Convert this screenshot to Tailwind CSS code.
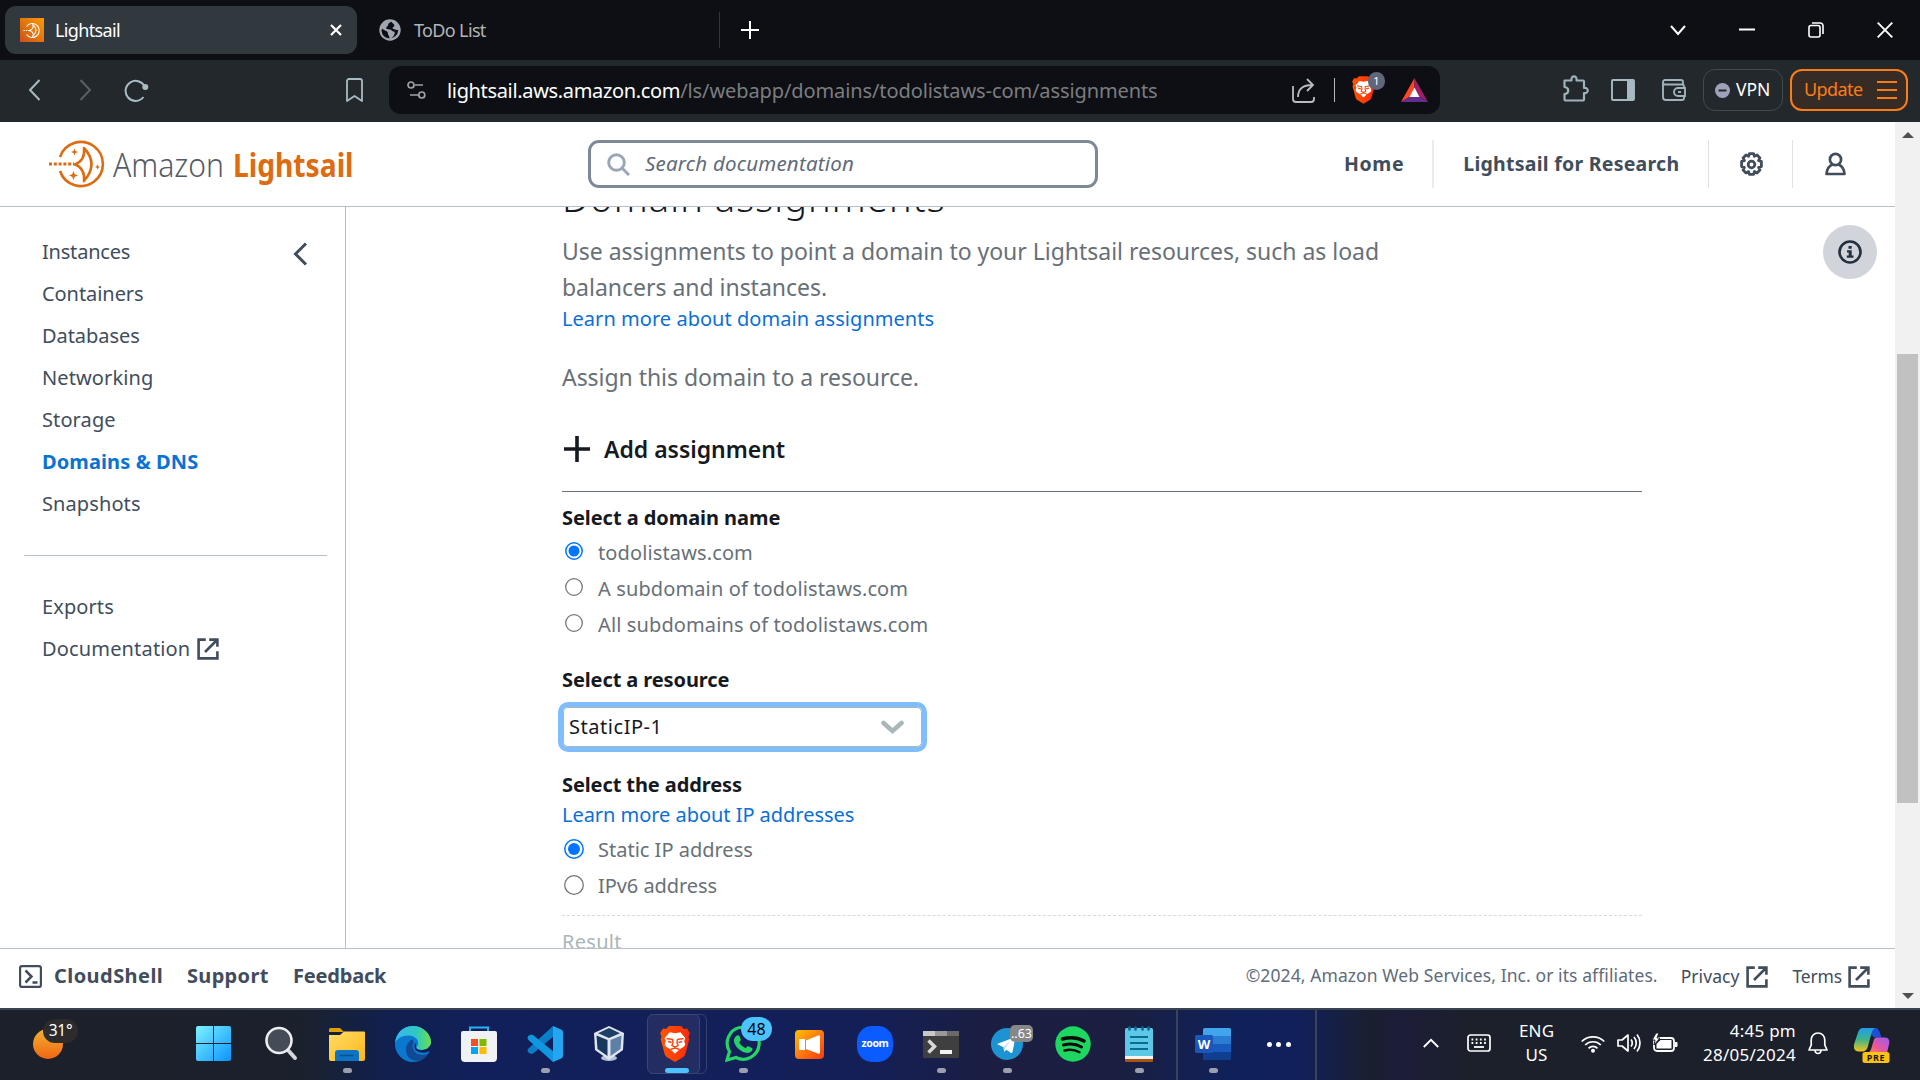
<!DOCTYPE html>
<html lang="en">
<head>
<meta charset="utf-8">
<title>Lightsail</title>
<script src="https://cdn.jsdelivr.net/npm/@tailwindcss/browser@4"></script>
</head>
<body class="w-[1920px] h-[1080px] overflow-hidden flex flex-col bg-white font-['Noto_Sans',sans-serif]">
<svg class="absolute w-0 h-0">
  <linearGradient id="lionFill"><stop offset="0" stop-color="#ff5500"/><stop offset="1" stop-color="#ff2a0a"/></linearGradient>
  <symbol id="lion" viewBox="0 0 30 36">
    <path fill="url(#lionFill)" d="M9 0h12l3 3 3-.6L29.800 7l-1.300 3.500.8 3-3.800 14c-.5 1.800-1.300 3-3 4L15 36l-7.500-4.500c-1.700-1-2.500-2.200-3-4L.7 13.500l.8-3L.2 7 3 2.400 6 3z"/>
    <path fill="#fff" d="M9.500 6.200 15 7.200l5.500-1 4.900 6-1.300 2.800 1.200 3.200-1.200 2.300-4.700 3-4.400 4.300-4.400-4.300-4.700-3-1.200-2.300L5.900 15l-1.300-2.800z"/>
    <path fill="none" stroke="#f9480f" stroke-width="1.500" d="M6.500 12.800c2-.5 4 .8 6 .7l.5 3-1 3 3 1.700 3-1.700-1-3 .5-3c2 .1 4-1.200 6-.7M8 15.500l3.500 1M22 15.500l-3.500 1M15 21v2M10.500 23.500l4.500-1.800 4.500 1.800"/>
  </symbol>
  <symbol id="ext" viewBox="0 0 22 22">
    <path fill="none" stroke="currentColor" stroke-width="2.600" d="M8.800 1.600H1.600v18.800h18.800v-7.200M12.200 1.600h8.200v7.200M8 14 20 2"/>
  </symbol>
</svg>

<!-- tab strip -->
<div class="h-[60px] bg-[#0d0f14] flex items-center shrink-0">
  <div class="ml-[5px] w-[352px] h-12 rounded-[11px] bg-[#31393e] flex items-center">
    <svg class="ml-[15px] w-6 h-6" viewBox="0 0 24 24"><defs><linearGradient id="fav" x1="0" y1="1" x2="1" y2="0"><stop offset="0" stop-color="#c8511b"/><stop offset="1" stop-color="#ff9900"/></linearGradient></defs><rect width="24" height="24" fill="url(#fav)"/><g fill="none" stroke="#fff" stroke-width="1.100"><path d="M6.500 8.500a7 7 0 1 1 0 8M13 7c4 3 4 7.500 0 11 .6-2-.5-4.500-3.500-5.500C12.500 11.500 13.500 9 13 7z"/><path stroke-dasharray="1.300 1" d="M3.500 12.500h6"/></g></svg>
    <span class="ml-[11px] pb-px text-[18px] leading-[24px] tracking-[-0.036em] text-white">Lightsail</span>
    <svg class="ml-auto mr-[15px] w-3 h-3" viewBox="0 0 12 12"><path stroke="#fff" stroke-width="2.200" d="M1 1l10 10M11 1 1 11"/></svg>
  </div>
  <svg class="ml-[22px] w-[22px] h-[22px]" viewBox="0 0 22 22"><circle cx="11" cy="11" r="10.700" fill="#a2a6ae"/><path fill="#0d0f14" d="M12 2.500c-1 1.500-3 1.500-2.800 3.300.2 1.400-2 1.400-2 3.200 0 1.200 1.500 1.400 3.300 1.400 2.500 0 2.500 2 4.300 2.200 1 .2 1.200 1.400.6 2.600-.9 1.800-2 4-4.500 4.300-.8 0-.2-2-1.400-3.300C8.300 15 9.500 13.500 8 12.500 6.300 11.400 4 10.500 3 9.500L2.500 12a8.600 8.600 0 0 0 7 7.300 8.600 8.600 0 0 0 9.800-8.300c-2.200.4-3-1-4.800-1-1.500-.1-1-1.800.2-2.200 1-.4.800-2.300-.2-2.800z"/></svg>
  <span class="ml-[13px] pb-px text-[18px] leading-[24px] tracking-[-0.036em] text-[#b3b4b7]">ToDo List</span>
  <div class="ml-[233px] w-px h-9 bg-[#34363b]"></div>
  <svg class="ml-[21px] w-[18px] h-[18px]" viewBox="0 0 18 18"><path stroke="#fff" stroke-width="2" d="M9 0v18M0 9h18"/></svg>
  <div class="ml-auto mr-[27px] flex items-center gap-[53px]">
    <svg class="w-4 h-4" viewBox="0 0 16 16"><path fill="none" stroke="#fff" stroke-width="2" d="M1 4l7 8 7-8"/></svg>
    <svg class="w-4 h-4" viewBox="0 0 16 16"><path stroke="#fff" stroke-width="2" d="M0 7.500h16"/></svg>
    <svg class="w-4 h-4" viewBox="0 0 16 16"><g fill="none" stroke="#fff" stroke-width="1.600"><rect x="1" y="3.500" width="11" height="11.500" rx="2"/><path d="M4 1h8a3 3 0 0 1 3 3v8"/></g></svg>
    <svg class="w-4 h-4" viewBox="0 0 16 16"><path stroke="#fff" stroke-width="1.900" d="M.7.700l14.600 14.600M15.300.7.700 15.300"/></svg>
  </div>
</div>

<!-- toolbar -->
<div class="h-[62px] bg-[#22282b] flex items-center shrink-0 pb-0.5">
  <svg class="ml-7 w-[13px] h-[22px]" viewBox="0 0 13 22"><path fill="none" stroke="#a9bbc3" stroke-width="2" d="M11.500 1 2 11l9.500 10"/></svg>
  <svg class="ml-[38px] w-[13px] h-[22px]" viewBox="0 0 13 22"><path fill="none" stroke="#566066" stroke-width="2" d="M1.500 1 11 11 1.500 21"/></svg>
  <svg class="ml-[32px] w-[25px] h-6" viewBox="0 0 25 24"><path fill="none" stroke="#a9bbc3" stroke-width="2" d="M21 9.500A10 10 0 1 0 19.500 19"/><circle cx="21.300" cy="9" r="3" fill="#a9bbc3"/></svg>
  <svg class="ml-[197px] w-[17px] h-6" viewBox="0 0 17 24"><path fill="none" stroke="#a9bbc3" stroke-width="1.800" stroke-linejoin="round" d="M1 3a2 2 0 0 1 2-2h11a2 2 0 0 1 2 2v20l-7.500-5L1 23z"/></svg>
  <div class="ml-[26px] w-[1051px] h-12 rounded-[12px] bg-[#0d0f14] flex items-center">
    <svg class="ml-[18px] w-[19px] h-5" viewBox="0 0 19 20"><g fill="none" stroke="#a0a3a6" stroke-width="1.700"><circle cx="4" cy="5" r="3"/><path d="M8 5h8M3 15h8"/><circle cx="14.800" cy="15" r="3"/></g></svg>
    <div class="ml-[21px] pt-px flex text-[20px] leading-[28px] text-[#7b7d80] whitespace-nowrap"><span class="text-white tracking-[-0.017em]">lightsail.aws.amazon.com</span><span class="tracking-[-0.005em]">/ls/webapp/domains/todolistaws-com/assignments</span></div>
    <svg class="ml-auto w-[23px] h-[25px]" viewBox="0 0 23 25"><path fill="none" stroke="#b9bcc0" stroke-width="1.800" d="M1 8v13a3 3 0 0 0 3 3h15a3 3 0 0 0 3-3v-2M6 19C6 11 11 7 20 7M15 1l6 6-6 6"/></svg>
    <div class="ml-[19px] w-px h-6 bg-[#b5b8bb]"></div>
    <div class="relative ml-[17px] w-[24px] h-7"><svg class="w-[23px] h-7"><use href="#lion"/></svg>
      <div class="absolute left-4 -top-1 w-[17px] h-[18px] rounded-full bg-[#62667a] text-white text-[11px] leading-[18px] text-center">1</div></div>
    <svg class="ml-[25px] mr-[12px] w-[27px] h-[24px]" viewBox="0 0 27 24"><path fill="#ff4724" d="M13.500 0 0 24l9-5.500 4.500-8z"/><path fill="#9e1f63" d="M13.500 0 27 24l-9-5.500-4.500-8z"/><path fill="#662d91" d="M0 24h27l-9-5.500H9z"/><path fill="#fff" d="M13.500 9.500 8.500 19h10z"/></svg>
  </div>
  <svg class="ml-[123px] mb-1 w-[26px] h-[27px]" viewBox="0 0 26 27"><path fill="none" stroke="#9fb1b9" stroke-width="2.200" stroke-linejoin="round" d="M1.500 5.500h7c-1-5.500 6-5.500 5 0h6.500a1 1 0 0 1 1 1V13c5-1 5 6 0 5v6a1.500 1.500 0 0 1-1.500 1.500H3A1.500 1.500 0 0 1 1.500 24v-5c5-.5 5-6.500 0-7z"/></svg>
  <svg class="ml-[22px] w-6 h-6" viewBox="0 0 24 24"><rect x="1" y="2" width="22" height="20" rx="1" fill="none" stroke="#a6b8c0" stroke-width="1.900"/><path fill="#a6b8c0" d="M16 2h7v20h-7z"/></svg>
  <svg class="ml-[27px] w-6 h-6" viewBox="0 0 24 24"><g fill="none" stroke="#9fb1b9" stroke-width="1.900"><path d="M21 7V4a2 2 0 0 0-2-2H3a2 2 0 0 0-2 2v15a3 3 0 0 0 3 3h16a2 2 0 0 0 2-2v-2M1 4.500C1 6 2 6.500 3 6.500h17a2 2 0 0 1 2 2V10"/><path d="M23 10h-7a4 4 0 0 0 0 8h7z"/><path d="M16 14h3"/></g></svg>
  <div class="ml-[17px] w-[80px] h-[42px] rounded-[12px] border border-[#3f4b50] flex items-center">
    <svg class="ml-[11px] w-[15px] h-[15px]" viewBox="0 0 15 15"><circle cx="7.500" cy="7.500" r="7.500" fill="#a0a2ba"/><path stroke="#22282b" stroke-width="2" d="M3.500 7.500h8"/></svg>
    <span class="ml-[6px] pb-0.5 text-[17.500px] text-white">VPN</span>
  </div>
  <div class="ml-[7px] w-[118px] h-[42px] rounded-[12px] border-2 border-[#fb7d16] bg-[#372c25] flex items-center">
    <span class="ml-[12px] pb-0.5 text-[18px] tracking-[-0.032em] text-[#fb7d16]">Update</span>
    <svg class="ml-auto mr-[9px] w-5 h-[18px]" viewBox="0 0 20 18"><path stroke="#fb7d16" stroke-width="1.800" d="M0 1h20M0 9h20M0 17h20"/></svg>
  </div>
</div>

<!-- web page -->
<div class="h-[886px] flex shrink-0">
 <div class="w-[1895px] flex flex-col">
  <header class="h-[85px] border-b border-[#b6bec9] flex items-center shrink-0 font-bold text-[19.500px] text-[#414d5c]">
    <svg class="ml-12 w-[310px] h-[52px] overflow-visible" viewBox="48 138 310 52">
      <g fill="none" stroke="#dd6b10" stroke-width="2.600"><path d="M60 157a22 22 0 1 1 0 14"/><path stroke-dasharray="3 1.800" stroke-width="3" d="M49 164h25"/><path stroke-linejoin="round" d="M84 148q15 16 0 33c1-7-2-14-9-16.500 7-3 10-9 9-16.500z"/></g>
      <g fill="#dd6b10"><path d="M74.500 148.500l1 2.500 2.500 1-2.500 1-1 2.500-1-2.500-2.500-1 2.500-1zM73.500 171l1.300 3.200 3.200 1.300-3.200 1.300-1.300 3.200-1.300-3.200-3.200-1.300 3.200-1.300zM97.500 164.500l.8 1.700 1.700.8-1.700.8-.8 1.700-.8-1.700-1.700-.8 1.700-.8z"/>
      <text x="233" y="176.500" font-size="33" font-weight="700" textLength="120.500" lengthAdjust="spacingAndGlyphs">Lightsail</text></g>
      <text x="113" y="176.500" font-size="33" font-weight="300" fill="#545b64" textLength="111" lengthAdjust="spacingAndGlyphs">Amazon</text>
    </svg>
    <div class="ml-[230px] w-[510px] h-12 rounded-[11px] border-[3px] border-[#7d8998] flex items-center">
      <svg class="ml-[16px] w-[23px] h-[23px]" viewBox="0 0 23 23"><g fill="none" stroke="#9ba7b6" stroke-width="3"><circle cx="9.500" cy="9.500" r="7.800"/><path d="M15 15l7 7"/></g></svg>
      <span class="ml-[15px] pb-0.5 font-normal italic text-[20.500px] tracking-[0.010em] text-[#5f6b7a]">Search documentation</span>
    </div>
    <span class="ml-[246px] tracking-[0.032em]">Home</span>
    <div class="ml-[28px] w-[2px] h-12 bg-[#e9ebed]"></div>
    <span class="ml-[29px] tracking-[0.013em] whitespace-nowrap">Lightsail for Research</span>
    <div class="ml-[29px] w-px h-12 bg-[#e0e2e5]"></div>
    <svg class="ml-[30px] w-[25px] h-[25px]" viewBox="0 0 24 24"><g fill="none" stroke="#414d5c" stroke-width="2.700" stroke-linejoin="round"><path d="M10 1.500h4l.8 2.700 2.500-1.300 2.800 2.800-1.300 2.500 2.700.8v5l-2.700.8 1.300 2.500-2.800 2.800-2.500-1.300-.8 2.700h-4l-.8-2.700-2.500 1.300-2.800-2.800 1.300-2.500-2.700-.8v-5l2.700-.8-1.300-2.500 2.800-2.800 2.500 1.300z"/><circle cx="12" cy="12" r="3.200"/></g></svg>
    <div class="ml-[28px] w-px h-12 bg-[#e0e2e5]"></div>
    <svg class="ml-[32px] w-[21px] h-6" viewBox="0 0 21 24"><g fill="none" stroke="#414d5c" stroke-width="2.700" stroke-linejoin="round"><circle cx="10.500" cy="7.500" r="5.600"/><path d="M7.500 12.500C4 14 1.800 17 1.500 22h18c-.3-5-2.500-8-6-9.500"/></g></svg>
  </header>

  <div class="h-[741px] flex overflow-hidden">
    <aside class="w-[346px] shrink-0 border-r border-[#b6bec9] pt-[24px] text-[20px] text-[#414d5c] leading-[42px] tracking-[0.005em]">
      <div class="flex justify-between pl-[42px] pr-[37px]">
        <nav class="flex flex-col">
          <a class="tracking-[-0.010em]">Instances</a><a class="tracking-[-0.003em]">Containers</a><a class="tracking-[-0.003em]">Databases</a><a>Networking</a><a>Storage</a><a class="font-bold text-[#0972d3]">Domains &amp; DNS</a><a>Snapshots</a>
        </nav>
        <svg class="mt-[11px] w-[15px] h-6" viewBox="0 0 15 24"><path fill="none" stroke="#414d5c" stroke-width="3" d="M13 1.500 2.500 12 13 22.500"/></svg>
      </div>
      <div class="ml-6 mr-[18px] mt-[30px] h-px bg-[#b6bec9]"></div>
      <nav class="flex flex-col pl-[42px] mt-[30px]"><a>Exports</a><a class="flex items-center tracking-[0.008em]">Documentation<svg class="ml-[7px] w-[22px] h-[22px]"><use href="#ext"/></svg></a></nav>
    </aside>

    <main class="grow relative pl-[216px] text-[20px] leading-[30px] tracking-[0.006em] text-[#687078]">
      <h1 class="-mt-[34px] text-[38px] leading-[48px] font-light text-[#16191f] tracking-[0.029em]">Domain assignments</h1>
      <p class="mt-[12px] text-[23px] leading-[36px] tracking-[-0.001em] w-[900px]">Use assignments to point a domain to your Lightsail resources, such as load<br>balancers and instances.</p>
      <a class="block -mt-px tracking-[0.002em] text-[#0a6fd6]">Learn more about domain assignments</a>
      <p class="mt-[25px] text-[23px] leading-[36px] tracking-[-0.002em]">Assign this domain to a resource.</p>
      <div class="mt-[36px] flex items-center text-[23px] leading-[36px] font-semibold tracking-[-0.001em] text-[#16191f]"><svg class="ml-[2px] mr-[14px] w-[26px] h-[26px]" viewBox="0 0 26 26"><path stroke="#16191f" stroke-width="3.600" d="M13 0v26M0 13h26"/></svg>Add assignment</div>
      <div class="mt-[24px] w-[1080px] h-px bg-[#687078]"></div>
      <h2 class="mt-[11px] font-bold text-[#16191f] tracking-[-0.003em]">Select a domain name</h2>
      <div class="mt-[2px] flex flex-col leading-[36px]">
        <label class="flex"><svg class="ml-[3px] mt-[7px] mr-[15px] w-[18px] h-[18px]" viewBox="0 0 18 18"><circle cx="9" cy="9" r="8.200" fill="#fff" stroke="#0075ff" stroke-width="1.500"/><circle cx="9" cy="9" r="5.500" fill="#0075ff"/></svg>todolistaws.com</label>
        <label class="flex"><svg class="ml-[3px] mt-[7px] mr-[15px] w-[18px] h-[18px]" viewBox="0 0 18 18"><circle cx="9" cy="9" r="8.300" fill="#fff" stroke="#767676" stroke-width="1.300"/></svg>A subdomain of todolistaws.com</label>
        <label class="flex"><svg class="ml-[3px] mt-[7px] mr-[15px] w-[18px] h-[18px]" viewBox="0 0 18 18"><circle cx="9" cy="9" r="8.300" fill="#fff" stroke="#767676" stroke-width="1.300"/></svg>All subdomains of todolistaws.com</label>
      </div>
      <h2 class="mt-[22px] font-bold text-[#16191f] tracking-[-0.005em]">Select a resource</h2>
      <div class="mt-[12px] w-[359px] ml-px h-10 rounded-[5px] border border-[#aab7b8] ring-5 ring-[#80bdff] flex items-center justify-between text-[#16191f] tracking-[0.027em]"><span class="ml-[5px]">StaticIP-1</span><svg class="mr-[17px] w-[23px] h-[15px]" viewBox="0 0 23 15"><path fill="none" stroke="#aab7b8" stroke-width="4.600" stroke-linecap="round" d="M2.500 3l9 8 9-8"/></svg></div>
      <h2 class="mt-[23px] font-bold text-[#16191f] tracking-[-0.005em]">Select the address</h2>
      <a class="block tracking-[-0.002em] text-[#0a6fd6]">Learn more about IP addresses</a>
      <div class="mt-[2px] flex flex-col leading-[36px]">
        <label class="flex tracking-[0em]"><svg class="ml-[2px] mt-[7px] mr-[14px] w-5 h-5" viewBox="0 0 20 20"><circle cx="10" cy="10" r="9.200" fill="#fff" stroke="#0075ff" stroke-width="1.500"/><circle cx="10" cy="10" r="6" fill="#0075ff"/></svg>Static IP address</label>
        <label class="flex tracking-[-0.003em]"><svg class="ml-[2px] mt-[7px] mr-[14px] w-5 h-5" viewBox="0 0 20 20"><circle cx="10" cy="10" r="9.300" fill="#fff" stroke="#767676" stroke-width="1.300"/></svg>IPv6 address</label>
      </div>
      <div class="mt-[11px] w-[1080px] border-t border-dashed border-[#d5dbdb]"></div>
      <p class="mt-[11px] text-[#aab7b8] tracking-[0.014em]">Result</p>
      <div class="absolute left-[1477px] top-[18px] w-[54px] h-[54px] rounded-full bg-[#d1d5db] flex items-center justify-center">
        <svg class="w-6 h-6" viewBox="0 0 24 24"><circle cx="12" cy="12" r="10.500" fill="none" stroke="#232f3e" stroke-width="2.600"/><path fill="#232f3e" d="M10.500 6h3.200v2.800h-3.200zM9 10.300h4.700v5.200h1.800v2.200H8.800v-2.200h1.900v-3H9z"/></svg>
      </div>
    </main>
  </div>

  <footer class="h-[60px] border-t border-[#b6bec9] flex items-center pb-[5px] text-[20px] text-[#414d5c]">
    <svg class="ml-[19px] w-[23px] h-[23px]" viewBox="0 0 23 23"><g fill="none" stroke="#414d5c" stroke-width="2.200"><rect x="1.100" y="1.100" width="20.800" height="20.800" rx="2"/><path stroke-width="2.500" d="M6.500 5.500l6 6-6 6M13.500 17.500h5"/></g></svg>
    <div class="ml-[12px] pb-px flex font-bold"><span class="tracking-[0.022em] w-[133px]">CloudShell</span><span class="tracking-[0.016em] w-[106px]">Support</span><span class="tracking-[-0.010em]">Feedback</span></div>
    <div class="ml-auto flex items-center text-[17.500px]"><span class="text-[#5f6b7a] tracking-[0.005em] pb-px">©2024, Amazon Web Services, Inc. or its affiliates.</span>
      <span class="ml-[23px] tracking-[0.004em]">Privacy</span><svg class="ml-[6px] mt-px w-[22px] h-[22px]"><use href="#ext"/></svg>
      <span class="ml-[25px] tracking-[-0.010em]">Terms</span><svg class="ml-[6px] mr-[25px] mt-px w-[22px] h-[22px]"><use href="#ext"/></svg></div>
  </footer>
 </div>
 <div class="w-[25px] bg-[#f1f1f1] flex flex-col items-center">
   <svg class="mt-[10px] w-[12px] h-[6px]" viewBox="0 0 12 6"><path fill="#505050" d="M6 0l6 6H0z"/></svg>
   <div class="mt-[216px] w-[21px] h-[449px] bg-[#c1c1c1]"></div>
   <svg class="mt-auto mb-[9px] w-[12px] h-[6px]" viewBox="0 0 12 6"><path fill="#505050" d="M6 6l6-6H0z"/></svg>
 </div>
</div>

<!-- taskbar -->
<div class="h-[72px] shrink-0 flex pb-0.5 border-t-2 border-[#3b4250] bg-[linear-gradient(90deg,#1c202b_0px,#1b212c_300px,#11204c_380px,#11205a_480px,#141f58_860px,#1b1e40_1000px,#1a1f42_1130px,#10215a_1230px,#11205a_1300px,#1a1f2f_1370px,#1c1d38_1400px,#1c202b_1470px,#1c202b_1920px)] text-white">
  <div class="w-[180px] relative"><div class="absolute left-[33px] top-[19px] w-[30px] h-[30px] rounded-full bg-linear-to-b from-[#f0b030] to-[#ef6410]"></div><div class="absolute left-[43px] top-[9px] w-[35px] h-[24px] rounded-full bg-[#2d2b2b] text-[15.500px] leading-[23px] text-center tracking-[-0.02em]">31°</div></div>

  <div class="w-[66px] flex items-center justify-center"><svg class="w-[35px] h-[35px] mb-0.5" viewBox="0 0 35 35"><defs><linearGradient id="win" x1="0" y1="0" x2="1" y2="1"><stop offset="0" stop-color="#7df3ff"/><stop offset="1" stop-color="#0a93ff"/></linearGradient></defs><path fill="url(#win)" d="M2 0h15v17H0V2a2 2 0 0 1 2-2zM18 0h15a2 2 0 0 1 2 2v15H18zM0 18h17v17H2a2 2 0 0 1-2-2zM18 18h17v15a2 2 0 0 1-2 2H18z"/></svg></div>
  <div class="w-[66px] flex items-center justify-center"><svg class="w-[34px] h-[35px] mb-0.5 ml-1" viewBox="0 0 34 35"><path stroke="#d5d7db" stroke-width="4" stroke-linecap="round" d="M23 23l8 9"/><circle cx="15" cy="14.500" r="12.500" fill="#454b57" stroke="#edeef0" stroke-width="2.600"/></svg></div>
  <div class="w-[66px] relative flex items-center justify-center pl-1"><svg class="w-9 h-[33px]" viewBox="0 0 36 33"><defs><linearGradient id="fold" x1="0" y1="0" x2="1" y2="1"><stop offset="0" stop-color="#ffdc6b"/><stop offset="1" stop-color="#fdb813"/></linearGradient></defs><path fill="#e0a10a" d="M0 1.500A1.500 1.500 0 0 1 1.500 0H11l4 4H0z"/><path fill="url(#fold)" d="M0 7h11l4-3.500h20a1 1 0 0 1 1 1V31a2 2 0 0 1-2 2H2a2 2 0 0 1-2-2z"/><path fill="#0f73c4" d="M6 33v-8a3 3 0 0 1 3-3h18a3 3 0 0 1 3 3v8z"/><path stroke="#084f8d" stroke-width="1.500" d="M10.500 27.500h14"/></svg><div class="absolute bottom-[5px] w-[9px] h-[5px] rounded-full bg-[#9b9fb0]"></div></div>
  <div class="w-[66px] flex items-center justify-center pl-1"><svg class="w-9 h-9" viewBox="0 0 36 36"><defs><linearGradient id="edge1"><stop offset="0" stop-color="#36b8f0"/><stop offset=".6" stop-color="#2fc8c0"/><stop offset="1" stop-color="#6be04a"/></linearGradient></defs><circle cx="18" cy="18" r="18" fill="#0b78d0"/><path fill="url(#edge1)" d="M0 17C1 7 8 0 18 0s18 8 18 15.500c0 6-4.500 8.500-9 8.500s-6-2-5-3.500c3.500-5-1-10.500-7.500-11C8 9 2 12 0 17z"/><path fill="#114a94" d="M17 13.500c-6 3-9 13-2 19 5 4 14 3 18.500-5-6 3-14 1-15.500-5-.8-3 0-4 .5-5 0-2 0-3-1.500-4z"/><path fill="#10205a" d="M36 24c-3 2-6 3-9 2.600-4-.3-7-2.300-7.500-5-.5-2.500.5-4 1-4.600.8 1.500.8 2.500.5 3.500-1 2 2 3.700 6 3.500 4.500-.2 7-2 9-6zM34 27.500l3-3v8l-5-2z"/></svg></div>
  <div class="w-[66px] flex items-center justify-center pl-1"><svg class="w-9 h-9" viewBox="0 0 36 36"><path fill="none" stroke="#2bb0f2" stroke-width="2" d="M9 8V1.500h18V8"/><path fill="#f1f2f4" d="M0 7a2 2 0 0 1 2-2h32a2 2 0 0 1 2 2v25a4 4 0 0 1-4 4H4a4 4 0 0 1-4-4z"/><path fill="#f25022" d="M10 13h7v7h-7z"/><path fill="#7fba00" d="M18.500 13h7v7h-7z"/><path fill="#00a4ef" d="M10 21h7v7h-7z"/><path fill="#ffb900" d="M18.500 21h7v7h-7z"/></svg></div>
  <div class="w-[66px] relative flex items-center justify-center pl-1"><svg class="w-9 h-9" viewBox="0 0 36 36"><path fill="#0a7ec9" d="M26 0 1.500 22.500c-1.500 1.500-1 3 0 4L3 27.500c1 .7 2 .5 3 0L27 10z"/><path fill="#0f97e0" d="M26 36 1.500 14c-1.500-1.500-1-3.500 0-4.300L3 9c1-.5 2-.5 3 0l21 17z"/><path fill="#23a5f2" d="M26 0l8 3.500c1.500.7 2 1.500 2 2.500v24c0 1-.5 1.800-2 2.500L26 36z"/></svg><div class="absolute bottom-[5px] w-[9px] h-[5px] rounded-full bg-[#9b9fb0]"></div></div>
  <div class="w-[66px] flex items-center justify-center"><svg class="w-[30px] h-[35px] mb-0.5" viewBox="0 0 30 35"><ellipse cx="15" cy="32" rx="8" ry="3" fill="#b5c0d5"/><path fill="#dfe5f0" d="M15 0l15 7-1 17-14 10L1 24 0 7z"/><path fill="#1d3f66" d="M15 2l11 5.200L15 12 4 7.200z"/><path fill="#17375d" d="M2.500 9.500 13.500 14v16L3.500 23z"/><path fill="#5e7fa6" d="M27.500 9.500 16.500 14v16l10-7z"/></svg></div>
  <div class="w-[66px] relative flex items-center justify-center pl-1">
    <div class="absolute left-[11px] top-[4px] w-[54px] h-[60px] rounded-[6px] border border-[#343f72]"></div>
    <div class="absolute left-[5px] top-[4px] w-[53px] h-[60px] rounded-[6px] border border-[#3b4575] bg-[#232d62]"></div>
    <svg class="relative w-[30px] h-9 mr-1"><use href="#lion"/></svg><div class="absolute left-[23px] bottom-[5px] w-6 h-[5px] rounded-full bg-[#4cc2ff]"></div></div>
  <div class="w-[66px] relative flex items-center justify-center pl-1"><svg class="w-9 h-9" viewBox="0 0 36 36"><path fill="none" stroke="#25d366" stroke-width="3.200" d="M2 34l2.500-8.500A16 16 0 1 1 11 31.500z"/><path fill="#25d366" d="M12 9.500c1-.5 2-.3 2.500.8l1.200 3c.3.800-.2 1.500-1.500 3 1.500 3 3.500 4.500 6.500 6 1.500-2 2-2.300 2.700-2l3.500 1.700c1 .5.600 2-.2 3-1.500 2-4 2.500-7 1.500C14 24.500 10 20 9 15.500c-.4-2.500 1-5 3-6z"/></svg><div class="absolute left-[33px] top-[7px] w-[31px] h-6 rounded-full bg-[#4cc2ff] text-black text-[16px] leading-6 text-center">48</div><div class="absolute bottom-[5px] w-[9px] h-[5px] rounded-full bg-[#9b9fb0]"></div></div>
  <div class="w-[66px] flex items-center justify-center pl-1"><svg class="w-[29px] h-[29px]" viewBox="0 0 29 29"><defs><linearGradient id="org" x1="0" y1="0" x2="1" y2="1"><stop offset="0" stop-color="#ffc000"/><stop offset=".5" stop-color="#ff7a10"/><stop offset="1" stop-color="#f23c10"/></linearGradient></defs><rect width="29" height="29" rx="4" fill="url(#org)"/><path fill="#fff" d="M5 9h5v11H5a1 1 0 0 1-1-1v-9a1 1 0 0 1 1-1zM11 10.500l12-5a1.500 1.500 0 0 1 2 1v16a1.500 1.500 0 0 1-2 1l-12-4.500z"/></svg></div>
  <div class="w-[66px] flex items-center justify-center pl-1"><div class="w-9 h-9 rounded-[15px] bg-[#0b5cff] text-[10.500px] leading-[34px] font-bold text-center tracking-[-0.04em]">zoom</div></div>
  <div class="w-[66px] relative flex items-center justify-center pl-1"><svg class="w-9 h-[27px]" viewBox="0 0 36 27"><rect width="36" height="27" rx="1.500" fill="#3f3f3f"/><path fill="#c8c8c8" d="M0 0h12v5H0z"/><path fill="#999" d="M12 0h12v5H12z"/><path fill="#6a6a6a" d="M24 0h12v5H24z"/><path fill="none" stroke="#d8d8d8" stroke-width="3.500" d="M5.500 9.500l6 6-6 6"/><path fill="#f2f2f2" d="M17 19h12v4H17z"/></svg><div class="absolute bottom-[5px] w-[9px] h-[5px] rounded-full bg-[#9b9fb0]"></div></div>
  <div class="w-[66px] relative flex items-center justify-center pl-1"><svg class="w-8 h-8" viewBox="0 0 32 32"><circle cx="16" cy="16" r="16" fill="#1d93d2"/><path fill="#fff" d="M6 16 23 9.500c1-.3 1.500.2 1.200 1.200L21.500 24c-.3 1-1 1.200-1.800.7l-4.200-3-2.300 2-.7-4.500z"/><path fill="#b8d8ea" d="M12.500 19.200 20 12.500l-6 7.500-.8 3.700z"/></svg><div class="absolute left-[38px] top-[15px] w-[23px] h-[17px] rounded-[5px] bg-[#878787] text-[12.500px] leading-[17px] text-center whitespace-nowrap">..63</div><div class="absolute bottom-[5px] w-[9px] h-[5px] rounded-full bg-[#9b9fb0]"></div></div>
  <div class="w-[66px] flex items-center justify-center pl-1"><svg class="w-9 h-9" viewBox="0 0 36 36"><circle cx="18" cy="18" r="17.700" fill="#1ed760"/><g fill="none" stroke="#0b0b0b" stroke-linecap="round"><path stroke-width="3.600" d="M7.500 13c7-2 15-1.500 21.500 2"/><path stroke-width="3" d="M8.500 19c6-1.700 13-1 18 2"/><path stroke-width="2.400" d="M9.500 24.500c5-1.200 10.500-.8 15 1.700"/></g></svg></div>
  <div class="w-[66px] relative flex items-center justify-center pl-1"><svg class="w-7 h-9" viewBox="0 0 28 36"><path fill="#a85410" d="M0 32h28v3a1 1 0 0 1-1 1H1a1 1 0 0 1-1-1z"/><path fill="#f4f4f4" d="M0 28h28v5H0z"/><path fill="#5cc8e6" d="M0 3.500A1.500 1.500 0 0 1 1.500 2h25A1.500 1.500 0 0 1 28 3.500V30H0z"/><path stroke="#0b6b94" stroke-width="2" d="M5 11h18M5 17h18M5 23h18"/><path stroke="#0b6b94" stroke-width="2.600" stroke-linecap="round" d="M4.500 1.500v2M10.500 1.500v2M17.500 1.500v2M23.500 1.500v2"/></svg><div class="absolute bottom-[5px] w-[9px] h-[5px] rounded-full bg-[#9b9fb0]"></div></div>
  <div class="ml-[6px] -mb-0.5 w-[2px] bg-[#3b4260]"></div>
  <div class="w-[68px] relative flex items-center justify-center pl-0.5"><svg class="w-9 h-8" viewBox="0 0 36 32"><path fill="#41a5ee" d="M8 1.500A1.500 1.500 0 0 1 9.500 0h25A1.500 1.500 0 0 1 36 1.500V8H8z"/><path fill="#2b7cd3" d="M8 8h28v8H8z"/><path fill="#185abd" d="M8 16h28v8H8z"/><path fill="#103f91" d="M8 24h28v6.500a1.500 1.500 0 0 1-1.500 1.500h-25A1.500 1.500 0 0 1 8 30.500z"/><rect y="7" width="18" height="18" rx="1.500" fill="#1b57bb"/><text x="9" y="20.500" font-size="13" font-weight="700" fill="#fff" text-anchor="middle">W</text></svg><div class="absolute bottom-[5px] w-[9px] h-[5px] rounded-full bg-[#9b9fb0]"></div></div>
  <div class="w-[69px] flex items-center justify-center gap-[4.500px] pr-1"><i class="w-[5px] h-[5px] rounded-full bg-white"></i><i class="w-[5px] h-[5px] rounded-full bg-white"></i><i class="w-[5px] h-[5px] rounded-full bg-white"></i></div>
  <div class="w-[2px] -mb-0.5 bg-[#3b4260]"></div>

  <!-- system tray -->
  <div class="ml-auto flex items-center text-[17px] leading-[24px] pb-0.5">
    <svg class="w-4 h-[10px]" viewBox="0 0 16 10"><path fill="none" stroke="#fff" stroke-width="1.900" d="M.8 9 8 1.800 15.200 9"/></svg>
    <svg class="ml-[28px] w-6 h-[18px]" viewBox="0 0 24 18"><rect x="1" y="1" width="22" height="16" rx="2.500" fill="none" stroke="#fff" stroke-width="1.700"/><path stroke="#fff" stroke-width="1.800" stroke-dasharray="1.800 2.400" d="M4.500 5.500h15M4.500 9h15"/><path stroke="#fff" stroke-width="1.800" d="M7 13h10"/></svg>
    <div class="ml-[28px] w-[35px] text-center tracking-[0.010em]">ENG<br>US</div>
    <svg class="ml-[27px] w-[24px] h-[19px]" viewBox="0 0 24 19"><g fill="none" stroke="#fff" stroke-width="1.700"><path d="M.7 7.500a16 16 0 0 1 22.600 0M4.200 11a11 11 0 0 1 15.600 0M7.500 14.300a6.400 6.400 0 0 1 9 0"/></g><circle cx="12" cy="16.700" r="2" fill="#fff"/></svg>
    <svg class="ml-[12px] w-[24px] h-5" viewBox="0 0 24 20"><g fill="none" stroke="#fff" stroke-width="1.700" stroke-linejoin="round"><path d="M1 7v6h4l6 5V2L5 7z"/><path d="M14 6.500c1.500 2 1.500 5 0 7M17 4c3 3.500 3 8.500 0 12M20 1.500c4 5 4 12 0 17"/></g></svg>
    <svg class="ml-[11px] w-[26px] h-5" viewBox="0 0 26 20"><rect x="2" y="5" width="20" height="13" rx="3" fill="none" stroke="#fff" stroke-width="1.800"/><path fill="#fff" d="M4.500 11l4-4H19.500v8.500h-15zM23 9h1.500a1 1 0 0 1 1 1v3a1 1 0 0 1-1 1H23z"/><path fill="#fff" stroke="#1c202b" stroke-width="1" d="M4 0 0 7h3l-1 5 6-7H5l2-5z"/></svg>
    <div class="ml-[23px] w-[95px] text-right tracking-[0.015em] whitespace-nowrap">4:45 pm<br>28/05/2024</div>
    <svg class="ml-[12px] w-5 h-[23px]" viewBox="0 0 20 23"><path fill="none" stroke="#fff" stroke-width="1.700" stroke-linejoin="round" d="M10 1C6 1 3.200 4 3.200 8v5L1 18h18l-2.200-5V8C16.800 4 14 1 10 1zM7 18.500c.5 4 5.500 4 6 0"/></svg>
    <svg class="ml-[26px] mr-[30px] mt-[4px] w-[36px] h-[35px]" viewBox="0 0 36 35"><defs><linearGradient id="cp1" x1="0" y1="0" x2="0" y2="1"><stop offset="0" stop-color="#1f9cf0"/><stop offset=".5" stop-color="#3fb58a"/><stop offset="1" stop-color="#f5c518"/></linearGradient><linearGradient id="cp2" x1="1" y1="0" x2="0" y2="1"><stop offset="0" stop-color="#9a5cf5"/><stop offset=".6" stop-color="#e9569c"/><stop offset="1" stop-color="#ff8a3c"/></linearGradient></defs><path fill="#1d4fd8" d="M15 0h6c3 0 4 2 5 5l1.500 4.500H20L15 4z"/><path fill="url(#cp1)" d="M9 0h12c-2 1-3 3-4 7l-3 11c-1 4-3 5.500-6 5.500H5c-4 0-6-3-5-7L4 4.500C5 1.500 6.500 0 9 0z"/><path fill="url(#cp2)" d="M23 9.500h8c3.500 0 5 3 4.200 6L33 25H14c2-1 3-3 4-7l1.500-5c.6-2 1.500-3.500 3.500-3.500z"/><rect x="8.500" y="24" width="27" height="11" rx="2.500" fill="#ffc20e"/><text x="22" y="32.800" font-size="9" font-weight="700" fill="#1a1a1a" text-anchor="middle" letter-spacing=".6">PRE</text></svg>
  </div>
</div>
</body>
</html>
